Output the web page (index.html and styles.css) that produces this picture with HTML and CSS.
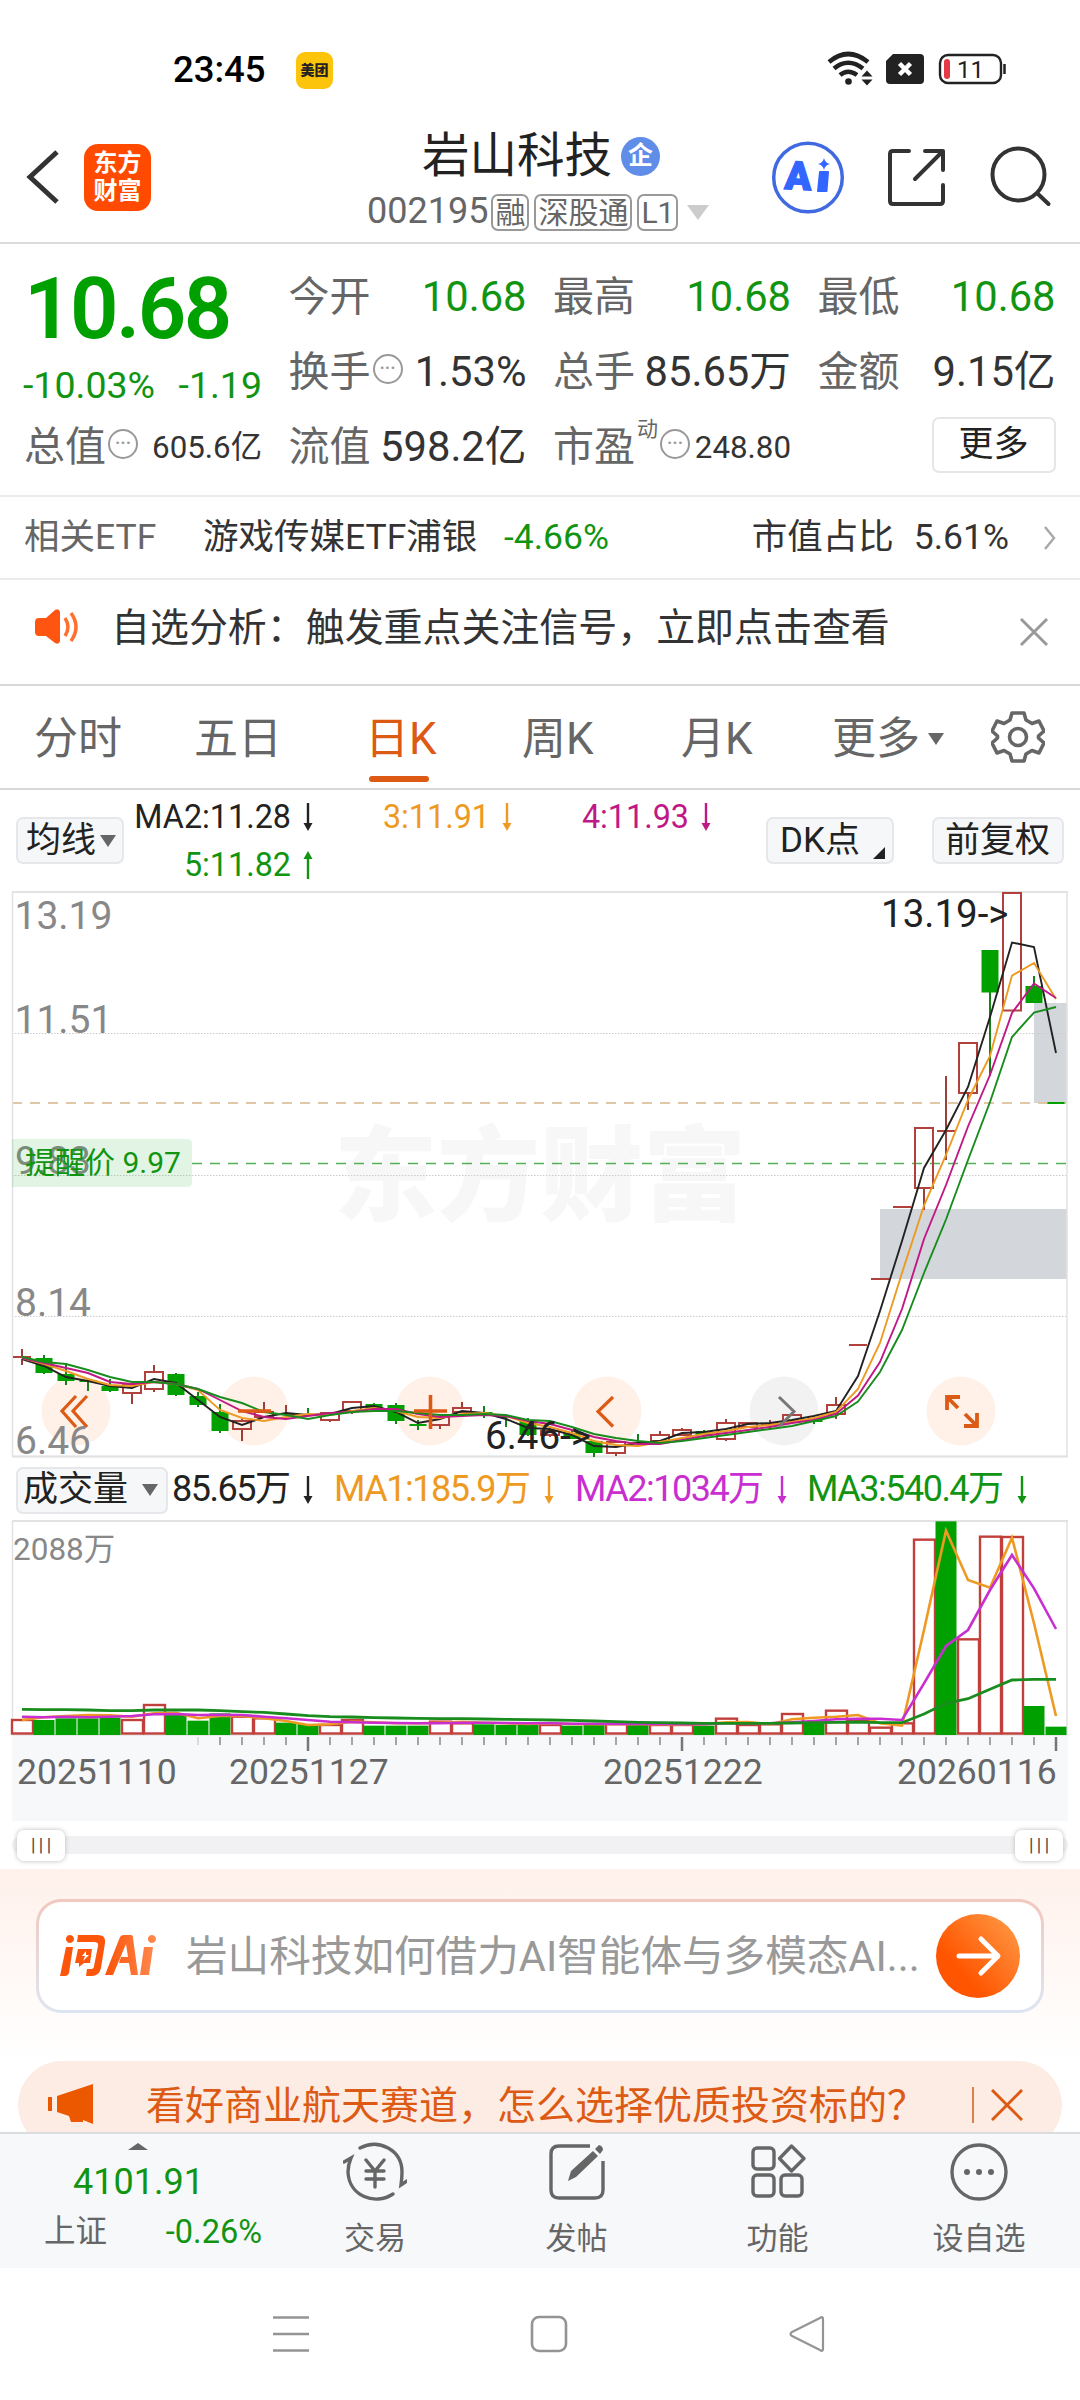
FILE: index.html
```html
<!DOCTYPE html>
<html lang="zh-CN">
<head>
<meta charset="utf-8">
<title>岩山科技 002195</title>
<link rel="stylesheet" href="styles.css">
</head>
<body>
<div class="screen">
  <div class="status">
    <span class="clock">23:45</span><span class="mt">美团</span>
    <svg class="sys" width="180" height="40" viewBox="826 50 180 40">
      <g fill="none" stroke="#222" stroke-width="4.6"><path d="M829 62Q848 46 868 62M834 68.500Q848 57 863 68.500M840 75Q848 68.500 857 75"/></g>
      <circle cx="848.500" cy="81.500" r="3.300" fill="#222"/>
      <path d="M861.500 76.500h11l-5.500-6zM861.500 79.500h11l-5.500 6z" fill="#222"/>
      <path d="M893 54h27q4 0 4 4v22q0 4-4 4h-30q-4 0-4-4V61z" fill="#222"/>
      <path d="M899.500 63.500l11 11M910.500 63.500l-11 11" stroke="#fff" stroke-width="4.500"/>
      <rect x="940" y="55" width="61" height="28" rx="8" fill="none" stroke="#222" stroke-width="2.400"/>
      <rect x="944" y="59" width="6" height="20" rx="3" fill="#e63946"/>
      <path d="M1004.500 64v10" stroke="#222" stroke-width="2.500"/>
      <text x="957" y="78" font-size="24" fill="#222">11</text>
    </svg>
  </div>

  <header class="head">
    <svg class="back" width="34" height="60" viewBox="0 0 34 60"><path d="M31 5L4 30l27 25" fill="none" stroke="#333" stroke-width="5"/></svg>
    <div class="brand"><span>东方</span><span>财富</span></div>
    <div class="names">
      <div class="title">岩山科技<span class="qi">企</span></div>
      <div class="code">002195<i>融</i><i>深股通</i><i>L1</i><b class="caret"></b></div>
    </div>
    <svg class="hicons" width="290" height="80" viewBox="770 137 290 80">
      <circle cx="808" cy="177.500" r="34.300" fill="none" stroke="#4169e1" stroke-width="3.500"/>
      <text x="785" y="190" font-size="39" font-weight="900" fill="#3366ff" stroke="#3366ff" stroke-width="1.500" transform="rotate(3 808 177)">A</text>
      <path d="M820 172h8l-1.500 19h-8.500z" fill="#3366ff" stroke="#3366ff" stroke-width="2" stroke-linejoin="round"/>
      <path d="M824 158q1 5 6 6q-5 1-6 6q-1-5-6-6q5-1 6-6z" fill="#3366ff"/>
      <g fill="none" stroke="#333" stroke-width="4" stroke-linecap="round" stroke-linejoin="round">
        <path d="M909 151h-16q-3 0-3 3v47q0 3 3 3h47q3 0 3-3v-16M925 151h18v19M942 152l-27 27"/>
        <circle cx="1018.500" cy="174.500" r="26"/><path d="M1038 194l10.500 10"/>
      </g>
    </svg>
  </header>

  <section class="quote">
    <div class="price">
      <div class="big">10.68</div>
      <div class="chg"><span>-10.03%</span><span>-1.19</span></div>
    </div>
    <div class="cell">今开<b class="g">10.68</b></div>
    <div class="cell">最高<b class="g">10.68</b></div>
    <div class="cell">最低<b class="g">10.68</b></div>
    <div class="cell">换手<span class="info">•••</span><b>1.53%</b></div>
    <div class="cell">总手<b>85.65万</b></div>
    <div class="cell">金额<b>9.15亿</b></div>
    <div class="cell">总值<span class="info">•••</span><b class="s">605.6亿</b></div>
    <div class="cell">流值<b>598.2亿</b></div>
    <div class="cell">市盈<sup>动</sup><span class="info">•••</span><b class="s">248.80</b></div>
    <div class="cell end"><span class="more">更多</span></div>
  </section>

  <section class="etf">
    <span class="lab">相关ETF</span><span class="fund">游戏传媒ETF浦银</span><span class="g">-4.66%</span>
    <span class="ratio">市值占比</span><span>5.61%</span>
    <svg width="14" height="26" viewBox="0 0 14 26"><path d="M2 2l9 11-9 11" fill="none" stroke="#aaa" stroke-width="2.500"/></svg>
  </section>

  <section class="notice">
    <svg width="46" height="38" viewBox="0 0 46 38"><path d="M5 10h7L21 2q4-2 5 2v29q-1 4-5 2l-9-7H5q-4 0-4-4V14q0-4 4-4z" fill="#ff5510"/><path d="M31 10q6 9 0 18M37 5q10 14 0 28" fill="none" stroke="#ff7030" stroke-width="3.500"/></svg>
    <span>自选分析：触发重点关注信号，立即点击查看</span>
    <svg class="x" width="32" height="32" viewBox="0 0 32 32"><path d="M3 3l26 26M29 3L3 29" stroke="#999" stroke-width="3"/></svg>
  </section>

  <nav class="tabs">
    <span>分时</span><span>五日</span><span class="on">日K</span><span>周K</span><span>月K</span><span>更多<b class="tri"></b></span>
    <svg width="54" height="54" viewBox="-27 -27 54 54"><path d="M-6-24H6L8-17 14-13.500 21-16 26-6 20.500-1V1L26 6 21 16 14 13.500 8 17 6 24H-6L-8 17-14 13.500-21 16-26 6-20.500 1V-1L-26-6-21-16-14-13.500-8-17Z" fill="none" stroke="#666" stroke-width="3.600" stroke-linejoin="round"/><circle r="8.500" fill="none" stroke="#666" stroke-width="3.600"/></svg>
  </nav>

  <section class="marow">
    <span class="btn ma">均线<b class="tri"></b></span>
    <div class="mas">
      <span class="k">MA2:11.28<svg class="ar"><use href="#down"/></svg></span>
      <span class="o">3:11.91<svg class="ar"><use href="#down"/></svg></span>
      <span class="m">4:11.93<svg class="ar"><use href="#down"/></svg></span>
      <span class="g">5:11.82<svg class="ar up"><use href="#down"/></svg></span>
    </div>
    <span class="btn dk">DK点<b class="corner"></b></span>
    <span class="btn fq">前复权</span>
  </section>

  <svg id="kline" class="kline" width="1080" height="576" viewBox="0 888 1080 576">
    <text x="334" y="1213" font-size="103" font-weight="900" fill="#f7f7f7">东方财富</text>
    <g fill="#d3d7dc"><path d="M1034 1003h33v100h-33zM880 1209h187v70H880z"/></g>
    <g stroke="#ccc" stroke-dasharray="1.500 1.500"><path d="M12 1033.500h1055M12 1175.500h1055M12 1316.500h1055"/></g>
    <path d="M12 1103h1055" stroke="#dfc7a8" stroke-width="2" stroke-dasharray="10 8"/>
    <path d="M192 1163.500h875" stroke="#55b055" stroke-width="1.600" stroke-dasharray="10 8"/>
    <path d="M12.500 892v564.500h1054.500V892" fill="none" stroke="#e2e2e4" stroke-width="1.500"/>
    <path d="M12 892h1056M12 1456.500h1056" stroke="#e2e2e4" stroke-width="2"/>
    <g fill="#fff0e8"><circle cx="76" cy="1411" r="34.500"/><circle cx="254" cy="1411" r="34.500"/><circle cx="430" cy="1411" r="34.500"/><circle cx="607" cy="1411" r="34.500"/><circle cx="961" cy="1411" r="34.500"/></g>
    <circle cx="784" cy="1411" r="34.500" fill="#f2f2f3"/>
    <g class="plot"></g>
    <g fill="none" stroke="#dc5a14" stroke-width="3.200">
      <path d="M76 1396l-14 15 14 16M87 1396l-14 15 14 16"/>
      <path d="M238 1411h33M414 1411h33M430.500 1395v34" stroke-width="3.600"/>
      <path d="M613 1397l-15 14.500 15 15"/>
      <path d="M960 1397h-13v13M947 1397l11 11M964 1426h13v-13M977 1426l-12-12" stroke-width="3.800"/>
    </g>
    <path d="M779 1397l15 14.500-15 15" fill="none" stroke="#777" stroke-width="3"/>
    <g font-size="39" fill="#888"><text x="14.500" y="929">13.19</text><text x="14.500" y="1033">11.51</text><text x="15" y="1174">9.83</text><text x="15" y="1316">8.14</text><text x="15" y="1454">6.46</text></g>
    <g font-size="38.500" fill="#222"><text x="881" y="927">13.19-&gt;</text><text x="485" y="1449">6.46-&gt;</text></g>
    <path d="M12 1139h175q5 0 5 5v38q0 5-5 5H12z" fill="#22a82e" fill-opacity=".13"/>
    <text x="25" y="1173" font-size="30" fill="#119411">提醒价 9.97</text>
  </svg>

  <section class="volrow">
    <span class="btn vb">成交量<b class="tri"></b></span>
    <span class="k">85.65万<svg class="ar"><use href="#down"/></svg></span>
    <span class="o">MA1:185.9万<svg class="ar"><use href="#down"/></svg></span>
    <span class="p">MA2:1034万<svg class="ar"><use href="#down"/></svg></span>
    <span class="g">MA3:540.4万<svg class="ar"><use href="#down"/></svg></span>
  </section>

  <svg id="volume" class="volume" width="1080" height="306" viewBox="0 1516 1080 306">
    <path d="M12 1736h1056v85H12z" fill="#f7f8fa"/>
    <path d="M12.500 1521v214h1054.500v-214" fill="none" stroke="#e2e2e4" stroke-width="1.500"/>
    <path d="M12 1521h1056" stroke="#e2e2e4" stroke-width="2"/>
    <text x="13" y="1560" font-size="31.500" fill="#888">2088万</text>
    <g class="plot"></g>
    <g font-size="35.500" fill="#666"><text x="17" y="1784">20251110</text><text x="229" y="1784">20251127</text><text x="603" y="1784">20251222</text><text x="897" y="1784">20260116</text></g>
  </svg>

  <div class="slider"><i></i><b>|||</b><b>|||</b></div>

  <section class="ask">
    <div class="askbox">
      <svg width="100" height="48" viewBox="58 1932 100 48">
        <defs><linearGradient id="fire" x1="0" x2="1"><stop offset=".5" stop-color="#fb560c"/><stop offset="1" stop-color="#ff8a50"/></linearGradient>
        <linearGradient id="ball" x1=".1" y1=".8" x2=".9" y2=".1"><stop offset=".2" stop-color="#ff5500"/><stop offset="1" stop-color="#ff9440"/></linearGradient></defs>
        <g fill="url(#fire)"><path fill-rule="evenodd" d="M66 1947h7l-4 26q-1 3-4 3h-5zM70 1935a4 4 0 1 1-.1 0zM78 1935h20q8 0 7 8l-4 25q-2 8-9 8h-6l1-7h4q3 0 3-3l4-20q1-4-4-4H77zM78 1949h14l-2 14h-6l-5 4v-4h-4zM105 1975l15-38q1-2 4-2h7q2 0 2 3l5 37h-7l-2-12h-10l2-6h7l-2-13-13 31zM144 1947h9l-4 28h-9zM152 1935a4 4 0 1 1-.1 0z"/></g>
        <path d="M86 1951l-4 5h3l-2 5 6-6h-3z" fill="#fff"/>
      </svg>
      <span>岩山科技如何借力AI智能体与多模态AI...</span>
      <svg width="84" height="84" viewBox="0 0 84 84"><circle cx="42" cy="42" r="42" fill="url(#ball)"/><path d="M23 42h38M45 25l17 17-17 17" fill="none" stroke="#fff" stroke-width="5" stroke-linecap="round" stroke-linejoin="round"/></svg>
    </div>
  </section>

  <div class="promo">
    <div class="pill">
      <svg width="48" height="42" viewBox="0 0 48 42"><path d="M0 13h4v14H0zM9 12L45 0v40l-10-4v2h-12l-2-6-12-4z" fill="#eb5800"/></svg>
      <span>看好商业航天赛道，怎么选择优质投资标的？</span>
      <i></i>
      <svg class="px" width="32" height="32" viewBox="0 0 32 32"><path d="M1 1l30 30M31 1L1 31" stroke="#dc5a14" stroke-width="3"/></svg>
    </div>
  </div>

  <nav class="bottom">
    <div class="index">
      <b class="upt"></b>
      <div class="pts">4101.91</div>
      <div class="sh"><span>上证</span><span class="g">-0.26%</span></div>
    </div>
    <div class="item"><svg viewBox="-32 -30 64 60"><g fill="none" stroke="#666" stroke-width="3.400" stroke-linecap="round"><path d="M-15-24C4-34 27-22 27 0Q27 6 26 13L32 9M18 22C0 34-26 24-27 0Q-27-7-24-14L-31-10M-9-12L0-1 9-12M-9-1H9M-9 7H9M0-1V15"/></g></svg>交易</div>
    <div class="item"><svg viewBox="-32 -30 64 60"><g fill="none" stroke="#666" stroke-width="3.400"><path d="M13-26H-18Q-26-26-26-18V18Q-26 26-18 26H18Q26 26 26 18V-11"/></g><path d="M-9 9l3-10L16-21l5 5L-1 5zM18-23l4-4q4 1 4 5l-3 4z" fill="#666"/></svg>发帖</div>
    <div class="item"><svg viewBox="-32 -30 64 60"><g fill="none" stroke="#666" stroke-width="3.400" stroke-linejoin="round"><rect x="-25" y="-24" width="21" height="21" rx="4"/><rect x="-25" y="3" width="21" height="21" rx="4"/><rect x="3" y="3" width="21" height="21" rx="4"/><path d="M13.500-26L26-13.500 13.500-1 1.500-13.500Z"/></g></svg>功能</div>
    <div class="item"><svg viewBox="-32 -30 64 60"><circle r="27" fill="none" stroke="#666" stroke-width="3.400"/><g fill="#666"><circle cx="-12" r="3"/><circle r="3"/><circle cx="12" r="3"/></g></svg>设自选</div>
  </nav>

  <div class="gesture">
    <svg width="560" height="40" viewBox="270 2314 560 40"><g fill="none" stroke="#949494" stroke-width="2.600" stroke-linejoin="round"><path d="M273 2317.500h36M273 2334h36M273 2350.500h36"/><rect x="532" y="2317" width="34" height="34" rx="7"/><path d="M823 2319v30q0 3-3 1l-28-14q-3-2 0-4l28-14q3-2 3 1z" stroke-width="2.200"/></g></svg>
  </div>
</div>
<svg class="defs"><symbol id="down" viewBox="0 0 12 30"><path d="M6 1v22" stroke="currentColor" stroke-width="2.400"/><path d="M1.500 21h9L6 29z" fill="currentColor"/></symbol></svg>
<script src="chart.js"></script>
</body>
</html>
```
FILE: styles.css
```css
*{box-sizing:border-box}
body{margin:0;background:#fff;font-family:Roboto,"Noto Sans CJK SC",sans-serif;line-height:1.2;color:#333}
.screen{width:1080px;height:2400px;overflow:hidden;display:flex;flex-direction:column}
.screen>*{flex:none}
svg{display:block;flex:none}
b,i{font-weight:400;font-style:normal}
.g{color:#119411}.k{color:#222}.o{color:#ee9a22}.m{color:#c01885}.p{color:#c92fd0}
.defs{width:0;height:0;position:absolute}

.status{height:138px;padding:2px 0 0 173px;display:flex;align-items:center}
.clock{font-size:36.500px;font-weight:500;color:#000;width:123px}
.mt{width:37px;height:37px;border-radius:9px;background:#fcc40a;color:#222;font-size:14px;font-weight:900;display:flex;align-items:center;justify-content:center}
.sys{margin-left:493px}

.head{height:106px;border-bottom:2px solid #dcdcdc;display:flex;align-items:center;padding:0 20px 26px 26px}
.back{margin-right:24px}
.brand{width:67px;height:67px;border-radius:14px;background:#ff4a00;color:#fff;font-size:24px;line-height:28px;font-weight:700;display:flex;flex-direction:column;align-items:center;justify-content:center}
.names{width:376px;margin:12px 0 0 216px;height:106px}
.title{display:flex;align-items:center;height:52px;font-size:47.500px;padding-left:55px;color:#222}
.qi{width:39px;height:39px;border-radius:50%;background:#5f8de8;color:#fff;font-size:25px;font-weight:700;display:flex;align-items:center;justify-content:center;margin-left:9px}
.code{display:flex;align-items:center;height:38px;margin-top:11px;font-size:36px;color:#666}
.code i{height:37px;border:2px solid #999;border-radius:7px;font-size:30px;line-height:34px;padding:0 2px;margin-left:5px}
.code i:first-of-type{margin-left:3px}
.caret{border:11px solid transparent;border-top:15px solid #ccc;border-bottom:0;margin-left:9px}
.hicons{margin-left:27px}

.quote{height:253px;padding:16px 25px 0 24px;border-bottom:2px solid #ebebeb;display:grid;grid-template-columns:238px 238px 238px 238px;column-gap:26.500px;grid-template-rows:75px 75px 75px}
.price{grid-row:span 2;color:#00a000}
.big{font-size:85px;font-weight:600;line-height:98px;letter-spacing:-2.500px}
.chg{display:flex;justify-content:space-between;font-size:37.500px;line-height:44px;color:#119411;margin:5px 0 0 -1px}
.cell{display:flex;align-items:center;font-size:41px;color:#666;white-space:nowrap}
.cell b{margin-left:auto;color:#333;font-size:41.700px}
.cell b.g{color:#119411}
.cell b.s{font-size:31.300px}
.cell sup{font-size:21px;align-self:flex-start;line-height:28px;margin:5px 0 0 2px}
.info{width:30px;height:30px;border:2.500px solid #999;border-radius:50%;font:9px/25px "DejaVu Sans",sans-serif;text-align:center;color:#999;margin:-7px 0 0 2px;display:block}
.more{margin-left:auto;width:124px;height:56px;border:2px solid #e6e6e6;border-radius:7px;font-size:35px;color:#222;display:flex;align-items:center;justify-content:center;margin-top:-5px}

.etf{height:83px;border-bottom:2px solid #ebebeb;padding:0 23px 0 24px;display:flex;align-items:center;font-size:35.500px;white-space:nowrap}
.lab{color:#666;width:179px}.fund{width:300px}
.etf .g{margin-left:1px}
.ratio{margin:0 20px 0 auto}
.etf svg{margin-left:34px}

.notice{height:106px;border-bottom:2px solid #d9d9d9;padding:0 30px 6px 34px;display:flex;align-items:center;font-size:38.950px;white-space:nowrap}
.notice>svg:first-child{margin-top:-4px}
.notice span{margin-left:31px;padding-bottom:1px}
.notice .x{margin:6px 0 0 auto}

.tabs{height:104px;border-bottom:2px solid #d9d9d9;padding-left:34px;display:grid;grid-template-columns:160px 171px 157px 159px 151px 159px 54px;align-items:center;font-size:44px;color:#666;white-space:nowrap}
.tabs span{height:100%;padding-top:4px;display:flex;align-items:center}
.on{color:#dc5a14;position:relative}
.on::after{content:"";position:absolute;left:4px;top:90px;width:60px;height:6px;border-radius:3px;background:#dc5a14}
.tri{border:8px solid transparent;border-top:12px solid #666;border-bottom:0;margin-left:8px}

.marow{height:98px;display:flex;padding:0 16px;white-space:nowrap}
.btn{height:47px;border:2px solid #e6e7ea;border-radius:7px;background:#f6f7f9;color:#222;font-size:35px;display:flex;align-items:center;margin-top:27px;padding-left:8px}
.btn .tri{margin-left:4px}
.ma{width:108px}
.mas{width:576px;margin-left:12px;display:grid;grid-template-columns:178px 199px 199px;grid-template-rows:48px 48px;font-size:32.300px;justify-items:end;margin-top:3px}
.mas span{display:flex;align-items:center}
.ar{width:12px;height:30px;margin-left:11px}
.up{transform:rotate(180deg)}
.dk{width:128px;margin-left:54px;padding-left:12px}
.corner{border-left:12px solid transparent;border-bottom:12px solid #222;margin:24px 0 0 13px}
.fq{width:132px;margin-left:38px;padding-left:11px}
.kline text,.volume text{font-family:Roboto,"Noto Sans CJK SC",sans-serif}

.volrow{height:52px;display:flex;align-items:center;padding:0 16px;font-size:36px;letter-spacing:-1.500px;white-space:nowrap}
.volrow span:not(.btn){display:flex;align-items:center;height:52px}
.volrow .btn{margin-top:0}
.vb{width:152px;letter-spacing:0;padding-left:5px}
.vb .tri{margin-left:14px}
.volrow .k{width:162px;margin-left:4px}.volrow .o{width:241px}.volrow .p{width:232px}
.volrow .ar{margin-left:13px}

.slider{height:47px;display:flex;justify-content:space-between;align-items:center;padding:0 17px;position:relative}
.slider i{position:absolute;left:12px;right:12px;top:14px;height:18px;border-radius:9px;background:#f1f1f3}
.slider b{position:relative;width:48px;height:31px;border-radius:7px;background:#fff;box-shadow:0 0 5px #bbb;font-size:18px;line-height:29px;letter-spacing:3.500px;text-indent:3.500px;text-align:center;color:#444}

.ask{height:192px;padding:30px 36px 0;background:linear-gradient(#fff1eb,#fff)}
.askbox{height:114px;border:3px solid transparent;border-radius:25px;background:linear-gradient(#fff,#fff) padding-box,linear-gradient(#f2c8be,#dde5f2) border-box;display:flex;align-items:center;padding:0 21px 0 19px;font-size:41.600px;color:#999;white-space:nowrap}
.askbox span{margin:1px 0 0 28px;width:735px}
.askbox svg:last-child{margin-left:auto}

.promo{height:71px;overflow:hidden;padding:0 18px}
.pill{height:88px;border-radius:44px;background:#fcece3;display:flex;align-items:center;padding:0 39px 0 30px;color:#dc5a14;font-size:39px;white-space:nowrap}
.pill span{margin:2px 0 0 50px}
.pill i{width:2px;height:36px;background:#dc8050;margin-left:auto}
.px{margin-left:17px}

.bottom{height:136px;border-top:2px solid #dadcde;background:#f6f8fa;display:grid;grid-template-columns:274px 202px 201px 201px 202px;color:#666}
.index{position:relative;padding:25px 0 0 44px}
.upt{position:absolute;left:128px;top:9px;border:10px solid transparent;border-bottom:7px solid #666;border-top:0}
.pts{font-size:36px;line-height:46px;color:#119411;padding-left:29px}
.sh{display:flex;justify-content:space-between;width:218px;font-size:31.500px;line-height:54px}
.sh .g{font-size:32.500px}
.item{display:flex;flex-direction:column;align-items:center;font-size:31px;line-height:44px;padding-top:8px}
.item svg{width:64px;height:60px;margin-bottom:15px}
.gesture{height:132px;padding:46px 0 0 270px}
```
FILE: chart.js
```js
// One slot per trading day, 22px apart.
const X = i => 22 + 22 * i;
const line = (ys, color, w, base = 0, k = 1) =>
  `<polyline fill="none" stroke="${color}" stroke-width="${w}" points="${ys.map((y, i) => `${X(i)},${(base + y * k).toFixed(1)}`).join(' ')}"/>`;

// [colour, body top, body bottom, wick top, wick bottom]
const candles = [
  ['r',1357,1359,1349,1365],['g',1358,1373,1355,1374],['g',1374,1381,1363,1385],['g',1380,1382,1379,1391],
  ['g',1386,1391,1379,1392],['r',1385,1393,1385,1404],['r',1372,1389,1365,1392],['g',1374,1395,1373,1396],
  ['g',1396,1405,1392,1407],['g',1412,1431,1404,1433],['r',1421,1429,1419,1441],['r',1412,1417,1402,1417],
  ['r',1414,1416,1405,1416],['g',1414,1416,1408,1416],['r',1413,1420,1413,1422],['r',1402,1411,1401,1414],
  ['g',1404,1410,1403,1412],['g',1405,1421,1403,1424],['g',1424,1426,1420,1430],['r',1417,1425,1415,1429],
  ['r',1408,1412,1402,1412],['g',1412,1416,1406,1418],['g',1416,1418,1416,1427],['g',1420,1435,1418,1436],
  ['r',1431,1435,1430,1437],['g',1433,1439,1430,1439],['g',1441,1453,1440,1457],['r',1442,1453,1441,1456],
  ['g',1442,1443,1434,1443],['r',1435,1441,1431,1441],['r',1430,1435,1428,1436],['g',1431,1435,1430,1436],
  ['r',1423,1439,1419,1441],['r',1423,1427,1422,1428],['r',1424,1425,1420,1429],['r',1415,1421,1413,1422],
  ['g',1420,1422,1418,1424],['r',1405,1414,1397,1419],['r',1345,1346,1345,1346],['r',1279,1280,1279,1280],
  ['r',1207,1208,1207,1208],['r',1128,1188,1128,1210],['r',1131,1132,1076,1160],['r',1043,1093,1043,1110],
  ['g',950,992.5,950,1076],['r',893,1010.5,893,1010.5],['g',986,1003,976,1003],['g',1102,1104,1102,1104]
];
let k = '';
candles.forEach(([c, a, b, w1, w2], i) => {
  const x = X(i), col = c === 'r' ? '#b0413c' : '#00a000';
  const wick = c === 'r' ? `M${x} ${w1}V${a}M${x} ${b}V${w2}` : `M${x} ${w1}V${w2}`;
  k += `<path d="${wick}" stroke="${c === 'r' ? '#9a4038' : '#16801c'}" stroke-width="2"/>`;
  k += c === 'r'
    ? (b - a < 3 ? `<path d="M${x - 9} ${a}h18" stroke="${col}" stroke-width="2"/>`
                 : `<rect x="${x - 9}" y="${a}" width="18" height="${b - a}" fill="none" stroke="${col}" stroke-width="2"/>`)
    : `<rect x="${x - 8.5}" y="${a}" width="17" height="${b - a}" fill="${col}"/>`;
});

const ma2 = [1359,1366,1377,1381,1386,1388,1379,1383,1400,1417,1425,1417,1413,1415,1414,1408,1406,1412,1423,1419,1411,1413,1419,1428,1429,1435,1446,1447,1443,1441,1433,1432,1429,1424,1423,1420,1416,1411,1376,1311,1241,1168,1130,1087,1017,942.5,947,1053];
const ma3 = [1358,1364,1371,1379,1385,1386,1382,1384,1390,1410,1418,1421,1417,1414,1415,1411,1408,1411,1417,1418,1414,1413,1416,1423,1427,1433,1441,1445,1446,1442,1438,1434,1431,1427,1425,1422,1418,1412,1389,1343,1273,1205.5,1155,1100,1056,975.6,963,999];
const ma4 = [1358,1363,1368,1373,1382,1384,1382,1384,1389,1400,1411,1417,1419,1416,1413,1412,1409,1409,1414,1417,1416,1415,1416,1421,1424,1430,1437,1441,1444,1444,1440,1436,1433,1430,1427,1423,1420,1414,1395.6,1362,1309,1239,1185,1126.5,1075,1013,983.5,998];
const ma5 = [1357,1362,1364,1370,1377,1382,1382,1384,1389,1397,1403,1412,1415,1419,1415,1412,1411,1411,1413,1415,1415,1414,1415,1420,1421,1427,1434,1438,1441,1443,1441,1438,1435,1432,1429,1426,1421,1416,1401.6,1372,1330,1273,1219.5,1160,1102,1037,1012.5,1007];
k += line(ma2, '#222', 1.9) + line(ma3, '#ee9a22', 1.9) + line(ma4, '#c01885', 1.9) + line(ma5, '#198c1e', 1.9);
document.querySelector('#kline .plot').innerHTML = k;

// Bar tops in third-pixel steps below the panel origin.
const red = new Set([0,5,6,10,11,14,15,19,20,24,27,29,30,32,33,34,35,37,39,40,38,41,43,44,45]);
const bars = [780,780,775,775,773,780,735,765,782,760,770,775,788,792,795,780,797,797,797,785,790,793,795,795,795,797,793,792,795,795,795,797,776,795,793,762,790,752,782,803,790,239,184,538,230,231,738,800];
let v = '';
bars.forEach((t, i) => {
  const y = 1460 + t / 3, x = X(i);
  v += red.has(i)
    ? `<rect x="${x - 10}" y="${y}" width="21" height="${1733.5 - y}" fill="#fff" stroke="#c2403c" stroke-width="2.4"/>`
    : `<rect x="${x - 10.5}" y="${y}" width="21" height="${1735 - y}" fill="#00a000"/>`;
});
const v1 = [780,772,768,765,766,770,760,758,775,768,768,775,783,795,793,785,787,790,790,788,785,788,790,792,790,792,793,792,793,793,794,793,787,786,793,778,773,770,765,790,797,510,212,360,383,233,490,768];
const v2 = [770,772,770,772,770,768,763,762,765,764,765,770,775,780,785,787,788,789,790,790,788,788,789,790,790,791,791,792,791,792,793,793,790,790,790,787,783,778,776,776,780,670,558,510,390,285,385,507];
const v3 = [748,749,749,750,752,752,750,750,750,752,755,757,762,767,770,771,773,774,775,776,776,777,778,779,780,781,783,785,787,788,789,790,790,790,790,789,788,787,786,788,788,762,730,716,688,660,658,658];
v += line(v1, '#ee9a22', 2.6, 1460, 1 / 3) + line(v2, '#c92fd0', 2.6, 1460, 1 / 3) + line(v3, '#198c1e', 2.8, 1460, 1 / 3);
for (let x = 198; x <= 1056; x += 22) {
  const major = (x - 308) % 374 === 0;
  v += `<path d="M${x} 1737v${major ? 14 : 8}" stroke="${x === 198 ? '#ccc' : '#777'}" stroke-width="${major ? 2.5 : 1.3}"/>`;
}
document.querySelector('#volume .plot').innerHTML = v;
```
